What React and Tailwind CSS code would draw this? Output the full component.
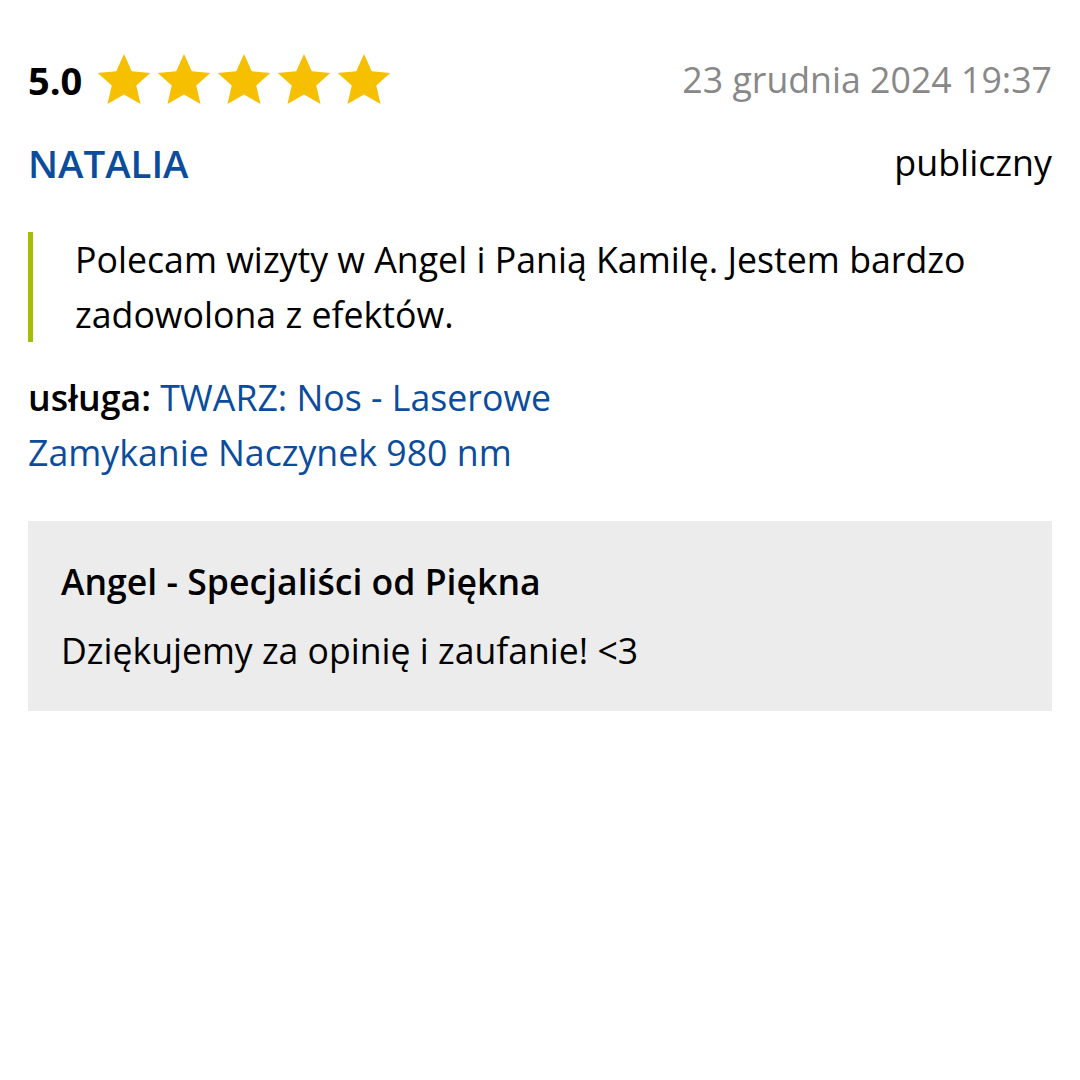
import React from "react";

function Star() {
  return (
    <svg viewBox="0 0 24 24" className="w-[60px] h-[60px]" aria-hidden="true">
      <path
        fill="#f6bf00"
        d="M12 1.6l3.1 6.9 7.4.7-5.6 5 1.7 7.4L12 17.8l-6.6 3.8 1.7-7.4-5.6-5 7.4-.7z"
      />
    </svg>
  );
}

export default function App() {
  return (
    <div
      className="w-[1080px] h-[1080px] bg-white px-[28px] pt-[50px] text-black"
      style={{ fontFamily: '"Open Sans", "Noto Sans", sans-serif' }}
    >
      <div className="flex items-center justify-between h-[60px]">
        <div className="flex items-center">
          <span className="text-[38px] font-bold leading-none mr-[12px]">5.0</span>
          <div className="flex">
            <Star />
            <Star />
            <Star />
            <Star />
            <Star />
          </div>
        </div>
        <span className="text-[35.7px] text-[#888888] leading-none">23 grudnia 2024 19:37</span>
      </div>

      <div className="flex items-center justify-between mt-[28px] h-[50px]">
        <span className="text-[38.4px] font-semibold text-[#0b4c9c] leading-none">NATALIA</span>
        <span className="text-[35.8px] leading-none">publiczny</span>
      </div>

      <div className="mt-[44px] border-l-[5px] border-[#a4be00] pl-[42px] text-[35.7px] leading-[55px]">
        Polecam wizyty w Angel i Panią Kamilę. Jestem bardzo zadowolona z efektów.
      </div>

      <div className="mt-[28px] text-[35.7px] leading-[55px] w-[600px]">
        <span className="font-semibold">usługa:</span>{" "}
        <span className="text-[#0b4c9c]">TWARZ: Nos - Laserowe Zamykanie Naczynek 980 nm</span>
      </div>

      <div className="mt-[41px] bg-[#ececec] px-[33px] pt-[38px] pb-[39px]">
        <div className="text-[35.6px] font-semibold leading-[44px]">Angel - Specjaliści od Piękna</div>
        <div className="text-[35.6px] leading-[44px] mt-[25px]">Dziękujemy za opinię i zaufanie! &lt;3</div>
      </div>
    </div>
  );
}
